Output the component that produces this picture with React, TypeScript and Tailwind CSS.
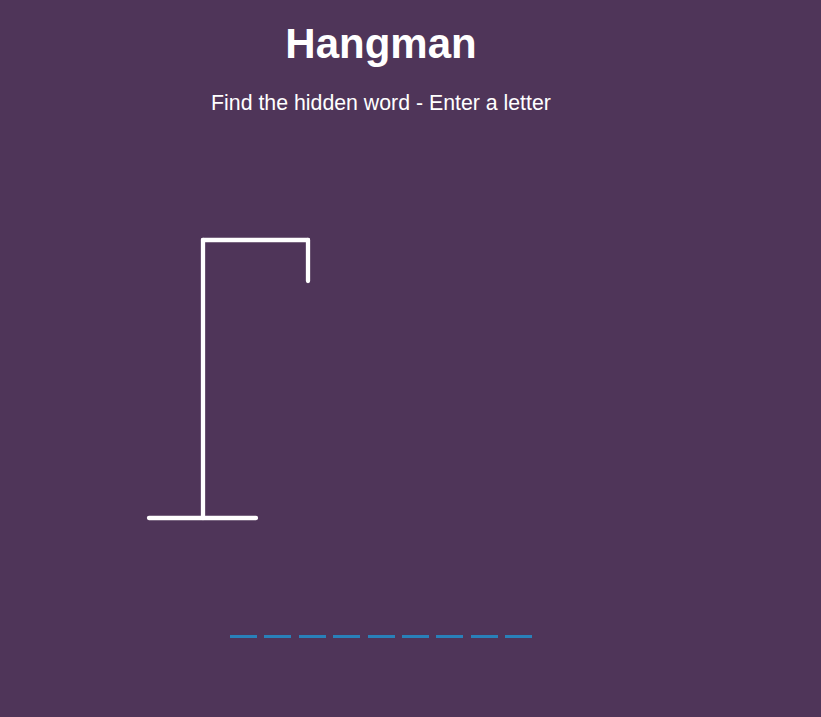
import React from 'react';

const WORD_LENGTH = 9;

const Gallows: React.FC = () => (
    <svg width="180" height="300" viewBox="0 0 180 300" fill="none" stroke="#ffffff" strokeWidth={4.3} strokeLinecap="round">
        {/* base, pole, beam, rope */}
        <line x1="9" y1="288" x2="116" y2="288" />
        <line x1="63" y1="10" x2="63" y2="288" />
        <line x1="63" y1="10" x2="168" y2="10" />
        <line x1="168" y1="10" x2="168" y2="51" />
    </svg>
);

const App: React.FC = () => {
    const letters = Array.from({ length: WORD_LENGTH }, (_, i) => i);

    return (
        <div className="min-h-screen bg-[#4f3559] text-white font-['Liberation_Sans',Arial,sans-serif]">
            <div className="w-[762px] flex flex-col items-center pt-[20px]">
                <h1 className="text-[42px] leading-[48px] font-bold">Hangman</h1>
                <p className="mt-[23px] text-[21.3px] leading-[24px]">Find the hidden word - Enter a letter</p>

                <div className="self-start ml-[140px] mt-[115px]">
                    <Gallows />
                </div>

                {/* Word slots */}
                <div className="mt-[58px] flex gap-[7.4px]">
                    {letters.map(i => (
                        <span key={i} className="w-[27px] h-[50px] border-b-[3px] border-[#2980b9]" />
                    ))}
                </div>
            </div>
        </div>
    );
};

export default App;
